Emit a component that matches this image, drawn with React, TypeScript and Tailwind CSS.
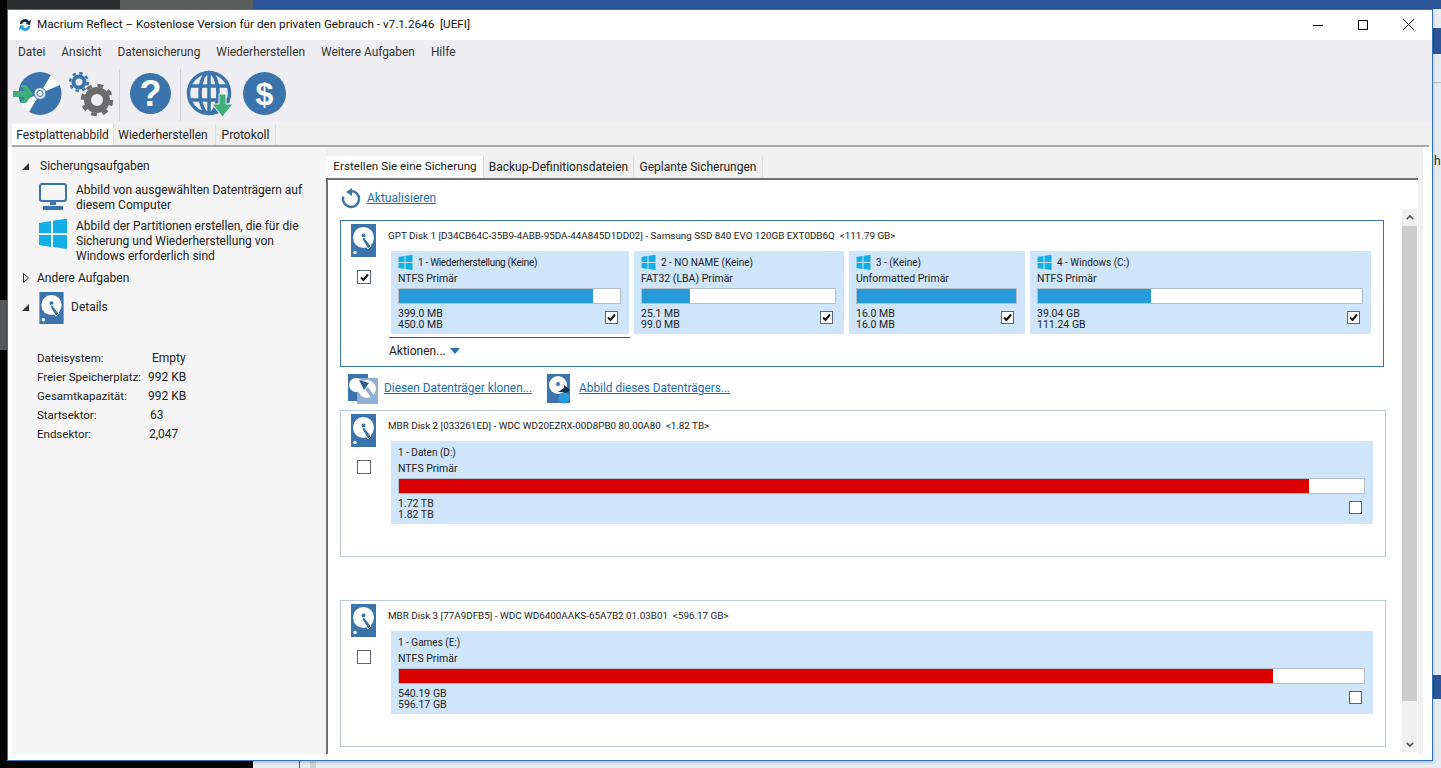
import React from 'react';

function HddIcon({ className = 'w-[25px] h-[33px]', fill = '#3b74ad' }: { className?: string; fill?: string }) {
  return (
    <svg viewBox="0 0 25 33" className={className}>
      <rect width="25" height="33" fill={fill} />
      <circle cx="12.5" cy="13.5" r="10.5" fill="#fff" />
      <circle cx="12.5" cy="11.5" r="2" fill={fill} />
      <path d="M11 15l2-2 7 9-3 3z" fill={fill} stroke="#fff" strokeWidth="1" />
      <circle cx="4" cy="28.5" r="1.8" fill="#fff" />
    </svg>
  );
}

function WinLogo({ className }: { className: string }) {
  return (
    <svg viewBox="0 0 28 30" className={className}>
      <path d="M0 4l12-2v12H0zM14 1.700l14-2V14H14zM0 16h12v12L0 26zM14 16h14v14l-14-2z" fill="#12aee8" />
    </svg>
  );
}

function Checkbox({ checked, className = 'w-[13px] h-[13px]' }: { checked?: boolean; className?: string }) {
  return (
    <span className={`border border-[#5a6672] bg-white flex items-center justify-center shrink-0 ${className}`}>
      {checked && (
        <svg viewBox="0 0 11 11" className="w-[11px] h-[11px]">
          <path d="M2 5.500l2.500 2.500L9 2.500" fill="none" stroke="#111" strokeWidth="2" />
        </svg>
      )}
    </span>
  );
}

interface Part {
  title: string;
  type: string;
  used: string;
  total: string;
  pct: number;
  color: string;
  width: string;
  checked: boolean;
  logo?: boolean;
  titleClass?: string;
}

function PartitionCard({ p }: { p: Part }) {
  return (
    <div className={`${p.width} h-[83px] bg-[#cfe5fc] pl-[7px] pr-[7px] flex flex-col text-[10.5px] leading-[11px] text-[#222] shrink-0`}>
      <div className="h-[22px] flex items-center gap-[5px] pt-[1px]">
        {p.logo && <WinLogo className="w-[15px] h-[15px]" />}
        <span className={p.titleClass ?? 'text-[10px]'}>{p.title}</span>
      </div>
      <div className="h-[10px] flex items-center">{p.type}</div>
      <div className="mt-[5px] h-[16px] mr-[1px] bg-white border border-[#b4bec8] shrink-0">
        <div className="h-full" style={{ width: `${p.pct}%`, backgroundColor: p.color }} />
      </div>
      <div className="flex justify-between items-start mt-[3px] pr-[4px]">
        <div className="flex flex-col pt-[1px]">
          <span>{p.used}</span>
          <span>{p.total}</span>
        </div>
        <Checkbox checked={p.checked} className="w-[13px] h-[13px] mt-[4px]" />
      </div>
    </div>
  );
}

function DiskBox({ title, parts, checked, active }: { title: string; parts: Part[]; checked?: boolean; active?: boolean }) {
  return (
    <div className={`h-[147px] border flex shrink-0 ${active ? 'w-[1044px] border-[#3a76ad]' : 'w-[1046px] border-[#bccad8]'}`}>
      <div className="w-[47px] pl-[10px] pt-[3px] flex flex-col shrink-0">
        <HddIcon />
        <Checkbox checked={checked} className="w-[14px] h-[14px] ml-[6px] mt-[13px]" />
      </div>
      <div className="flex flex-col pt-[7px] flex-1">
        <div className="h-[16px] flex items-center text-[9.85px] text-[#222] whitespace-pre">{title}</div>
        <div className="flex gap-[5px] pl-[3px] mt-[7px]">
          {parts.map((p) => <PartitionCard key={p.title} p={p} />)}
        </div>
        {active && (
          <div className="w-[241px] ml-[1px] border-t border-[#1f5c96] mt-[3px] pt-[5px] h-[22px] flex items-center gap-[4px] text-[12px] text-[#222]">
            <span>Aktionen...</span>
            <svg viewBox="0 0 10 6" className="w-[10px] h-[6px]"><path d="M0 0h10L5 6z" fill="#2a6fb0" /></svg>
          </div>
        )}
      </div>
    </div>
  );
}

const disk1: Part[] = [
  { title: '1 - Wiederherstellung (Keine)', type: 'NTFS Primär', used: '399.0 MB', total: '450.0 MB', pct: 88, color: '#269bd8', width: 'w-[238px]', checked: true, logo: true, titleClass: 'text-[10px] tracking-[-0.3px]' },
  { title: '2 - NO NAME (Keine)', type: 'FAT32 (LBA) Primär', used: '25.1 MB', total: '99.0 MB', pct: 25, color: '#269bd8', width: 'w-[210px]', checked: true, logo: true },
  { title: '3 -  (Keine)', type: 'Unformatted Primär', used: '16.0 MB', total: '16.0 MB', pct: 100, color: '#269bd8', width: 'w-[176px]', checked: true, logo: true },
  { title: '4 - Windows (C:)', type: 'NTFS Primär', used: '39.04 GB', total: '111.24 GB', pct: 35, color: '#269bd8', width: 'w-[341px]', checked: true, logo: true },
];
const disk2: Part[] = [
  { title: '1 - Daten (D:)', type: 'NTFS Primär', used: '1.72 TB', total: '1.82 TB', pct: 94.300, color: '#dc0000', width: 'w-[982px]', checked: false },
];
const disk3: Part[] = [
  { title: '1 - Games (E:)', type: 'NTFS Primär', used: '540.19 GB', total: '596.17 GB', pct: 90.600, color: '#dc0000', width: 'w-[982px]', checked: false },
];

function ToolIcons() {
  return (
    <div className="h-[54px] flex items-center bg-[#eeeef2] pl-[5px] shrink-0">
      {/* cd with arrow */}
      <svg viewBox="0 0 50 46" className="w-[50px] h-[46px] shrink-0">
        <circle cx="27" cy="21.500" r="21.500" fill="#3b74ad" />
        <path d="M27 21.500L38 3A21.500 21.500 0 0 1 47 13zM27 21.500L16 40A21.500 21.500 0 0 1 7 30z" fill="#fff" />
        <circle cx="27" cy="21.500" r="6" fill="#dfe8f0" stroke="#3b74ad" strokeWidth="1" />
        <circle cx="27" cy="21.500" r="3" fill="#fff" stroke="#3b74ad" strokeWidth="1" />
        <path d="M0 19h12l-5-6h6l7 9-7 9H7l5-6H0z" fill="#3fb07a" />
      </svg>
      {/* gears */}
      <svg viewBox="0 0 48 46" className="w-[48px] h-[46px] ml-[4px] shrink-0">
        <g fill="none" stroke="#3b74ad">
          <circle cx="12" cy="10" r="5.500" strokeWidth="4" />
          <circle cx="12" cy="10" r="8.800" strokeWidth="2.500" strokeDasharray="3.450 3.460" />
        </g>
        <g fill="none" stroke="#6b6b6b">
          <circle cx="30" cy="28" r="9.500" strokeWidth="7" />
          <circle cx="30" cy="28" r="14.500" strokeWidth="3.500" strokeDasharray="5.690 5.700" />
        </g>
      </svg>
      <div className="w-px h-[52px] bg-[#d4d4d8] ml-[4px]" />
      <div className="w-[41px] h-[41px] rounded-full bg-[#3b74ad] ml-[10px] mb-[3px] flex items-center justify-center text-white text-[36px] font-bold leading-none font-['Liberation_Sans']">?</div>
      <div className="w-px h-[52px] bg-[#d4d4d8] ml-[9px]" />
      {/* globe */}
      <svg viewBox="0 0 48 46" className="w-[48px] h-[46px] ml-[6px] shrink-0 overflow-visible">
        <g fill="none" stroke="#3b74ad" strokeWidth="3.500">
          <circle cx="22" cy="21" r="20.500" />
          <ellipse cx="22" cy="21" rx="9" ry="20.500" />
          <path d="M3 14h38M3 28h38M22 1v40" />
        </g>
        <path d="M32 22h7v10h7L35.500 45 25 32h7z" fill="#3fb07a" stroke="#eeeef2" strokeWidth="1" />
      </svg>
      <div className="w-[43px] h-[43px] rounded-full bg-[#3b74ad] ml-[8px] mb-[3px] flex items-center justify-center text-white text-[32px] font-bold leading-none font-['Liberation_Sans']">$</div>
    </div>
  );
}

function Sidebar() {
  const rows: [string, string, string][] = [
    ['Dateisystem:', 'Empty', 'pl-[115px]'],
    ['Freier Speicherplatz:', '992 KB', 'pl-[111px]'],
    ['Gesamtkapazität:', '992 KB', 'pl-[111px]'],
    ['Startsektor:', '63', 'pl-[113px]'],
    ['Endsektor:', '2,047', 'pl-[112px]'],
  ];
  return (
    <div className="w-[314px] bg-[#f5f5f5] ml-[4px] flex flex-col pt-[9px] text-[12px] leading-[15px] text-[#222] shrink-0">
      <div className="flex items-center h-[20px] pl-[10px] gap-[11px]">
        <span className="w-0 h-0 border-l-[7px] border-l-transparent border-b-[7px] border-b-[#333]" />
        <span>Sicherungsaufgaben</span>
      </div>
      <div className="flex pl-[27px] gap-[9px] mt-[7px] h-[30px]">
        <svg viewBox="0 0 28 28" className="w-[28px] h-[28px] shrink-0">
          <rect x="1" y="1" width="26" height="17" rx="2" fill="none" stroke="#3b74ad" strokeWidth="2" />
          <path d="M11 19h6v3h-6zM4 23h20v4H4z" fill="#3b74ad" />
        </svg>
        <div>Abbild von ausgewählten Datenträgern auf<br />diesem Computer</div>
      </div>
      <div className="flex pl-[27px] gap-[9px] mt-[6px] h-[45px]">
        <WinLogo className="w-[28px] h-[30px] shrink-0" />
        <div>Abbild der Partitionen erstellen, die für die<br />Sicherung und Wiederherstellung von<br />Windows erforderlich sind</div>
      </div>
      <div className="flex items-center h-[20px] pl-[11px] mt-[4px]">
        <svg viewBox="0 0 6 10" className="w-[6px] h-[10px] shrink-0"><path d="M.5.500l5 4.500-5 4.500z" fill="none" stroke="#333" strokeWidth="1" /></svg>
        <span className="ml-[8px]">Andere Aufgaben</span>
      </div>
      <div className="flex items-center pl-[10px] mt-[3px] h-[33px]">
        <span className="w-0 h-0 border-l-[7px] border-l-transparent border-b-[7px] border-b-[#333]" />
        <HddIcon className="w-[25px] h-[32px] ml-[10px]" />
        <span className="ml-[7px]">Details</span>
      </div>
      <div className="flex flex-col pl-[25px] mt-[25px]">
        {rows.map(([k, v, pad]) => (
          <div key={k} className="h-[19px] flex items-center relative">
            <span className="w-0 whitespace-nowrap text-[11.5px]">{k}</span>
            <span className={pad}>{v}</span>
          </div>
        ))}
      </div>
    </div>
  );
}

function Actions() {
  return (
    <div className="h-[43px] flex items-center pl-[8px] shrink-0 text-[11.85px] text-[#1a6fb5] underline">
      <svg viewBox="0 0 30 30" className="w-[30px] h-[30px] shrink-0">
        <path d="M0 0h20v27H0z" fill="#3b74ad" />
        <path d="M9 4h21v26H9z" fill="#8fb0d0" />
        <circle cx="8" cy="11" r="7" fill="#fff" />
        <circle cx="19" cy="15" r="9" fill="#fff" />
        <path d="M17 15l3-2 7 10-3 2z" fill="#8fb0d0" />
        <path d="M11 6l10 3-5 7z" fill="#2a5f90" />
      </svg>
      <span className="ml-[6px] pt-[1px]">Diesen Datenträger klonen...</span>
      <svg viewBox="0 0 26 30" className="w-[26px] h-[30px] ml-[14px] shrink-0">
        <rect x="1" width="23" height="29" fill="#3b74ad" />
        <circle cx="12" cy="11" r="9" fill="#fff" />
        <circle cx="12" cy="10" r="2" fill="#3b74ad" />
        <path d="M12 18l6-4v-3l6 5-6 5v-3z" fill="#17324e" />
        <circle cx="18" cy="24" r="5.500" fill="#2b9ad8" />
      </svg>
      <span className="ml-[7px] pt-[1px]">Abbild dieses Datenträgers...</span>
    </div>
  );
}

export default function App() {
  return (
    <div className="relative w-[1441px] h-[768px] overflow-hidden bg-[#e6ebf1] font-['Roboto',sans-serif]">
      {/* desktop behind the window */}
      <div className="absolute left-0 top-0 w-[253px] h-[9px] bg-[#2b2f2f]" />
      <div className="absolute left-[120px] top-0 w-[133px] h-[9px] bg-[#5a5f5c]" />
      <div className="absolute left-[253px] right-0 top-0 h-[9px] bg-[#2a5597]" />
      <div className="absolute left-0 top-0 w-[7px] h-[768px] bg-[#050505]" />
      <div className="absolute left-0 bottom-0 w-[253px] h-[8px] bg-[#050505]" />
      <div className="absolute left-0 top-[300px] w-[7px] h-[50px] bg-[#55585a]" />
      <div className="absolute left-[299px] bottom-0 w-px h-[8px] bg-[#555]" />
      <div className="absolute left-[310px] bottom-0 w-[6px] h-[8px] bg-[#d0d0d0]" />
      <div className="absolute right-0 top-[28px] w-[8px] h-[26px] bg-[#2a5597]" />
      <div className="absolute right-0 top-[82px] w-[8px] h-px bg-[#bbb]" />
      <div className="absolute right-0 top-[675px] w-[8px] h-[24px] bg-[#2a5597]" />
      <div className="absolute left-[1434px] top-[155px] text-[12px] leading-none text-[#222] overflow-hidden w-[7px]">h</div>

      {/* window */}
      <div className="absolute left-[7px] top-[9px] w-[1426px] h-[752px] border border-[#2f75b5] bg-white flex flex-col shadow-[0_1px_3px_rgba(0,0,0,0.25)]">
        <div className="h-[30px] flex items-center pl-[10px] shrink-0 text-[11.73px] text-[#111]">
          <svg viewBox="0 0 14 14" className="w-[14px] h-[14px]">
            <path d="M2 6a5 5 0 0 1 9-3l2-1-1 5-5-1 2-1a3 3 0 0 0-5 1z" fill="#1d2f44" />
            <path d="M12 8a5 5 0 0 1-9 3l-2 1 1-5 5 1-2 1a3 3 0 0 0 5-1z" fill="#2a9bd8" />
          </svg>
          <span className="ml-[5px] whitespace-pre">Macrium Reflect – Kostenlose Version für den privaten Gebrauch - v7.1.2646  [UEFI]</span>
          <div className="ml-auto flex items-center gap-[35px] pr-[18px] -mt-[1px]">
            <div className="w-[10px] h-px bg-black mt-[1px]" />
            <div className="w-[10px] h-[10px] border border-black" />
            <svg viewBox="0 0 11 11" className="w-[11px] h-[11px]"><path d="M0 0l11 11M11 0L0 11" stroke="#111" strokeWidth="1" /></svg>
          </div>
        </div>
        <div className="h-[28px] bg-[#eeeef2] flex items-center gap-[16px] pl-[10px] pb-[2px] shrink-0 text-[11.9px] text-[#333]">
          <span>Datei</span>
          <span>Ansicht</span>
          <span>Datensicherung</span>
          <span>Wiederherstellen</span>
          <span>Weitere Aufgaben</span>
          <span>Hilfe</span>
        </div>
        <ToolIcons />
        <div className="h-[25px] bg-[#f0f0f0] pl-[4px] pr-[3px] flex items-end shrink-0 text-[12px] text-[#222]">
          <div className="flex items-stretch h-[23px] w-full border-b-[2px] border-b-[#a8a8a8]">
            <div className="w-[102px] bg-white flex items-center justify-center border-r border-[#ddd]">Festplattenabbild</div>
            <div className="w-[102px] border-r border-[#ddd] flex items-center justify-center pr-[3px]">Wiederherstellen</div>
            <div className="w-[60px] border-r border-[#ddd] flex items-center justify-center">Protokoll</div>
          </div>
        </div>
        <div className="flex flex-1 min-h-0 bg-white pb-[6px]">
          <Sidebar />
          <div className="w-[1097px] bg-[#f0f0f0] flex flex-col pt-[9px] shrink-0">
            <div className="h-[22px] flex items-stretch text-[12px] text-[#222] shrink-0">
              <div className="w-[158px] bg-white flex items-center justify-center pb-[1px] pl-[1px] text-[11.7px] border-r border-[#ddd]">Erstellen Sie eine Sicherung</div>
              <div className="w-[150px] flex items-center justify-center pb-[1px] border-r border-[#ddd]">Backup-Definitionsdateien</div>
              <div className="w-[129px] flex items-center justify-center pb-[1px] border-r border-[#ddd]">Geplante Sicherungen</div>
            </div>
            <div className="flex-1 min-h-0 w-[1092px] bg-white border-t-[2px] border-l-[2px] border-t-[#707070] border-l-[#707070] flex">
              <div className="w-[1073px] flex flex-col pl-[12px] shrink-0">
                <div className="h-[40px] flex items-center pl-[1px] pb-[4px] shrink-0">
                  <svg viewBox="0 0 20 21" className="w-[20px] h-[21px]">
                    <path d="M10 3A8 8 0 1 1 2.400 8.500" fill="none" stroke="#3b74ad" strokeWidth="2.500" />
                    <path d="M11 0v8L5 4z" fill="#3b74ad" />
                  </svg>
                  <span className="ml-[6px] text-[12px] text-[#1a6fb5] underline">Aktualisieren</span>
                </div>
                <DiskBox active checked title="GPT Disk 1 [D34CB64C-35B9-4ABB-95DA-44A845D1DD02] - Samsung SSD 840 EVO 120GB EXT0DB6Q  <111.79 GB>" parts={disk1} />
                <Actions />
                <DiskBox title="MBR Disk 2 [033261ED] - WDC WD20EZRX-00D8PB0 80.00A80  <1.82 TB>" parts={disk2} />
                <div className="h-[43px] shrink-0" />
                <DiskBox title="MBR Disk 3 [77A9DFB5] - WDC WD6400AAKS-65A7B2 01.03B01  <596.17 GB>" parts={disk3} />
              </div>
              <div className="w-[15px] ml-[1px] mt-[29px] mb-[2px] bg-[#f0f0f0] flex flex-col items-center shrink-0">
                <svg viewBox="0 0 10 6" className="w-[8px] h-[5px] my-[6px] shrink-0"><path d="M1 5l4-4 4 4" fill="none" stroke="#555" strokeWidth="2" /></svg>
                <div className="w-full h-[475px] bg-[#cdcdcd] shrink-0" />
                <svg viewBox="0 0 10 6" className="w-[8px] h-[5px] mt-auto mb-[5px] shrink-0"><path d="M1 1l4 4 4-4" fill="none" stroke="#555" strokeWidth="2" /></svg>
              </div>
            </div>
          </div>
        </div>
      </div>
    </div>
  );
}
